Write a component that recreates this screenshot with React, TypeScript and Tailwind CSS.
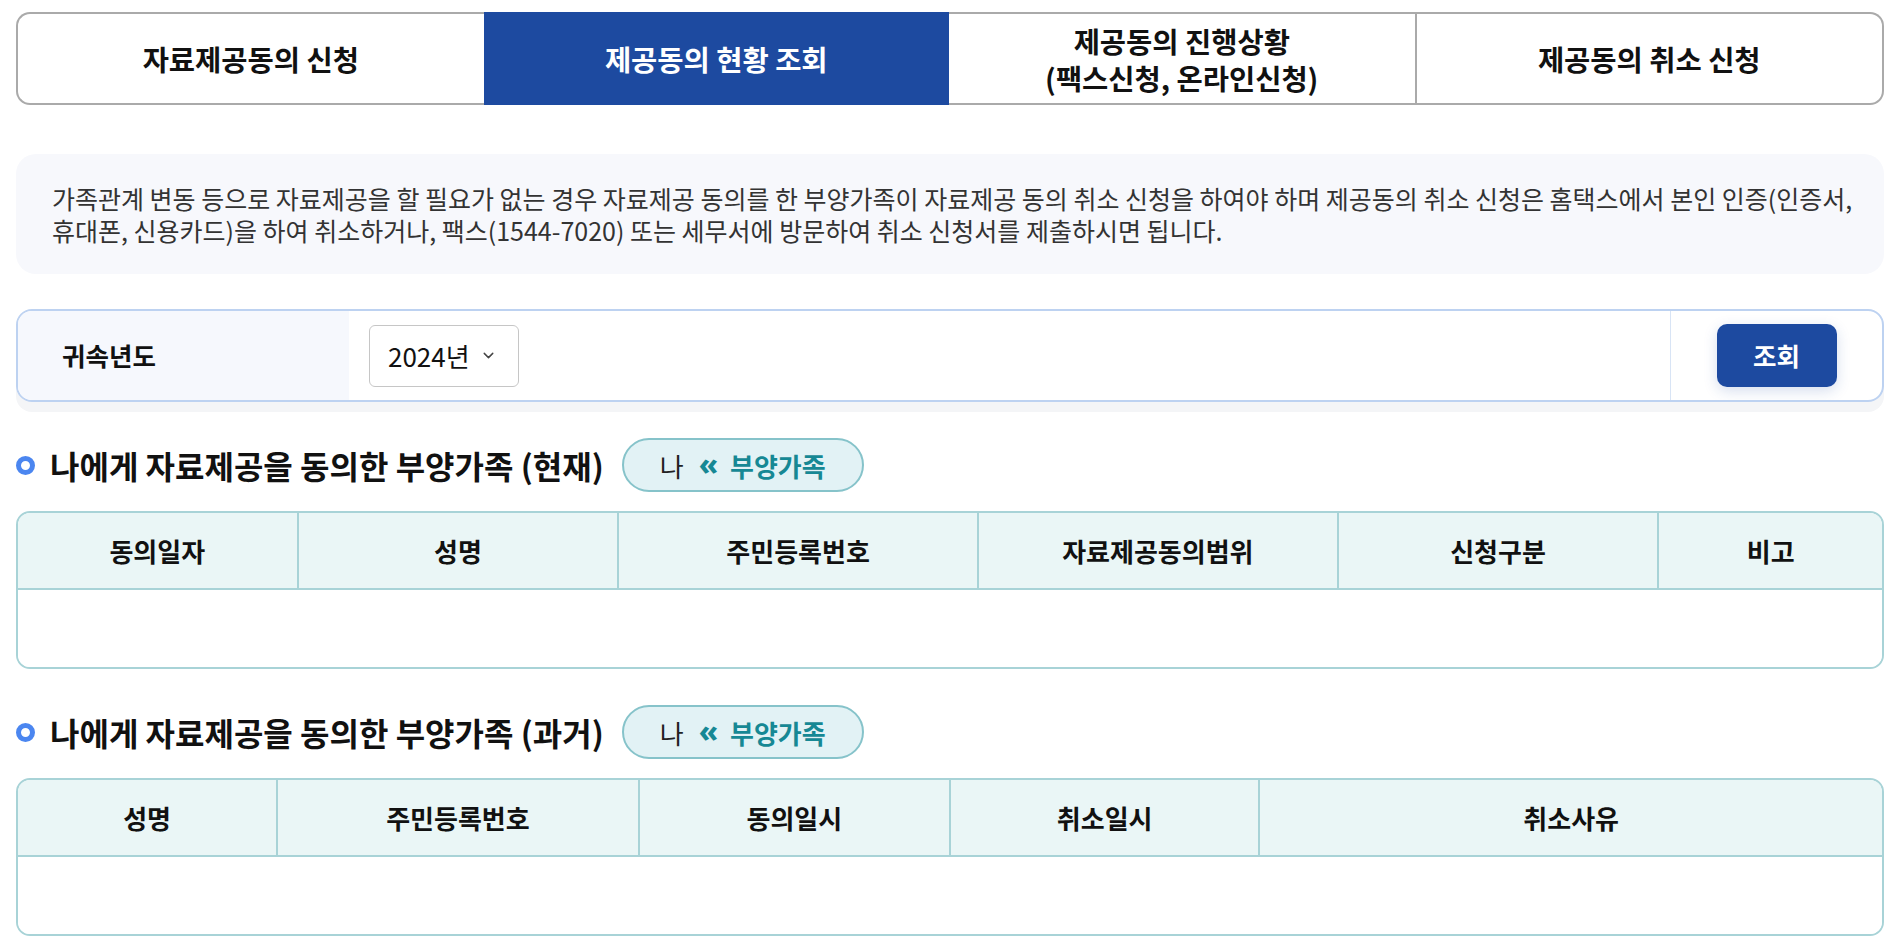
import React, { useState } from 'react';
import { ChevronDown } from 'lucide-react';

type Tab = { id: string; lines: string[] };

const tabs: Tab[] = [
  { id: 'apply', lines: ['자료제공동의 신청'] },
  { id: 'status', lines: ['제공동의 현황 조회'] },
  { id: 'progress', lines: ['제공동의 진행상황', '(팩스신청, 온라인신청)'] },
  { id: 'cancel', lines: ['제공동의 취소 신청'] },
];

// column widths for the two result tables
const currentCols = [
  { title: '동의일자', width: 'w-[15%]' },
  { title: '성명', width: 'w-[17.2%]' },
  { title: '주민등록번호', width: 'w-[19.3%]' },
  { title: '자료제공동의범위', width: 'w-[19.3%]' },
  { title: '신청구분', width: 'w-[17.2%]' },
  { title: '비고', width: 'w-auto' },
];

const pastCols = [
  { title: '성명', width: 'w-[13.9%]' },
  { title: '주민등록번호', width: 'w-[19.4%]' },
  { title: '동의일시', width: 'w-[16.7%]' },
  { title: '취소일시', width: 'w-[16.6%]' },
  { title: '취소사유', width: 'w-auto' },
];

const SectionTitle: React.FC<{ title: string }> = ({ title }) => (
  <div className="flex items-center h-[54px]">
    <span className="w-[19px] h-[19px] rounded-full border-[5px] border-[#4b86f0] bg-white" />
    <h2 className="ml-[15px] text-[32px] font-bold text-[#111]">{title}</h2>
    <div className="ml-[18px] flex items-center h-[54px] px-[36px] rounded-full border-2 border-[#86c3ca] bg-[#e2f2f5] text-[26px]">
      <span className="text-[#222]">나</span>
      <span className="ml-[15px] -mt-[3px] font-['Noto_Sans',sans-serif] text-[30px] leading-none font-extrabold text-[#168894]">
        «
      </span>
      <span className="ml-[12px] font-bold text-[#168894]">부양가족</span>
    </div>
  </div>
);

const ResultTable: React.FC<{ cols: { title: string; width: string }[] }> = ({ cols }) => (
  <div className="mt-[19px] rounded-[14px] border-2 border-[#a8d3d7] overflow-hidden">
    <table className="w-full table-fixed border-collapse">
      <colgroup>
        {cols.map((c) => (
          <col key={c.title} className={c.width} />
        ))}
      </colgroup>
      <thead>
        <tr>
          {cols.map((c, i) => (
            <th
              key={c.title}
              className={
                'h-[76px] bg-[#eaf6f6] border-b-2 border-[#a8d3d7] text-[26px] font-bold text-[#111] ' +
                (i > 0 ? 'border-l-2' : '')
              }
            >
              {c.title}
            </th>
          ))}
        </tr>
      </thead>
      <tbody>
        <tr>
          <td colSpan={cols.length} className="h-[78px] bg-white" />
        </tr>
      </tbody>
    </table>
  </div>
);

export default function App() {
  const [activeTab, setActiveTab] = useState('status');
  const [year, setYear] = useState('2024');

  return (
    <div className="min-h-screen bg-white px-4 pt-3 pb-4 font-['Noto_Sans_CJK_KR','Noto_Sans',sans-serif] text-[#111]">
      {/* tabs */}
      <div className="flex h-[93px]">
        {tabs.map((tab, i) => {
          const active = tab.id === activeTab;
          return (
            <button
              key={tab.id}
              onClick={() => setActiveTab(tab.id)}
              className={[
                'flex-1 flex flex-col items-center justify-center border-y-2 text-[28.5px] font-bold leading-[37px]',
                i === 0 ? 'border-l-2 rounded-l-[14px]' : '',
                i === tabs.length - 1 ? 'border-r-2 rounded-r-[14px]' : '',
                i === 2 ? 'border-r-2' : '',
                active ? 'bg-[#1d4aa0] border-[#1d4aa0] text-white' : 'bg-white border-[#aaaaaa] text-[#111]',
              ].join(' ')}
            >
              {tab.lines.map((l) => (
                <span key={l}>{l}</span>
              ))}
            </button>
          );
        })}
      </div>

      {/* notice */}
      <div className="mt-[49px] rounded-[20px] bg-[#f7f8fc] pl-9 pr-2 py-7 text-[25px] leading-[32px] text-[#333] break-keep">
        가족관계 변동 등으로 자료제공을 할 필요가 없는 경우 자료제공 동의를 한 부양가족이 자료제공 동의 취소 신청을 하여야 하며 제공동의 취소 신청은 홈택스에서 본인 인증(인증서, 휴대폰, 신용카드)을 하여 취소하거나, 팩스(1544-7020) 또는 세무서에 방문하여 취소 신청서를 제출하시면 됩니다.
      </div>

      {/* search */}
      <div className="mt-[35px] flex h-[93px] rounded-[16px] border-2 border-[#bdd2f1] overflow-hidden shadow-[0_10px_0_0_#f4f5f7]">
        <div className="w-[331px] flex items-center pl-[44px] bg-[#f6f8fd] text-[25.5px] font-bold text-[#111]">
          귀속년도
        </div>
        <div className="flex-1 flex items-center pl-[20px]">
          <button
            onClick={() => setYear(year)}
            className="w-[150px] h-[62px] flex items-center gap-[10px] pl-[18px] rounded-[6px] border border-[#c6c6c6] bg-white text-[26px] text-[#111]"
          >
            <span>{year}년</span>
            <ChevronDown size={17} strokeWidth={2} className="text-[#444]" />
          </button>
        </div>
        <div className="w-[212px] flex items-center justify-center border-l border-[#d8e4f5]">
          <button className="w-[120px] h-[63px] rounded-[10px] bg-[#1d4aa0] text-[25.5px] font-bold text-white shadow-[0_4px_14px_rgba(29,74,160,0.18)]">
            조회
          </button>
        </div>
      </div>

      {/* current */}
      <div className="mt-[36px]">
        <SectionTitle title="나에게 자료제공을 동의한 부양가족 (현재)" />
        <ResultTable cols={currentCols} />
      </div>

      {/* past */}
      <div className="mt-[36px]">
        <SectionTitle title="나에게 자료제공을 동의한 부양가족 (과거)" />
        <ResultTable cols={pastCols} />
      </div>
    </div>
  );
}
